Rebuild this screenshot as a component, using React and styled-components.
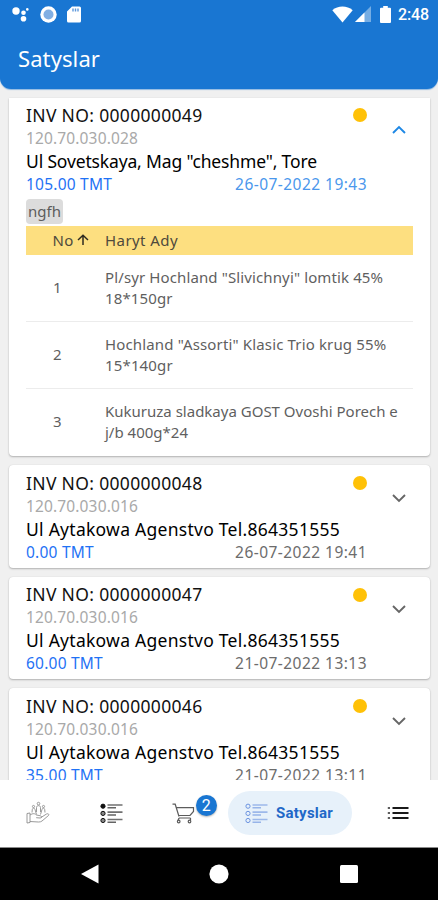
import React from 'react';
import styled, { createGlobalStyle } from 'styled-components';

const Global = createGlobalStyle`
  *, *::before, *::after { box-sizing: border-box; }
  body { margin: 0; background: #f0f0f0; font-family: "Noto Sans", "Open Sans", sans-serif; }
`;

const Screen = styled.div`
  width: 438px;
  height: 900px;
  display: flex;
  flex-direction: column;
  overflow: hidden;
  background: #f0f0f0;
`;

const AppBar = styled.header`
  flex: none;
  height: 89px;
  background: #1976d2;
  border-radius: 0 0 11px 11px;
  box-shadow: 0 1px 1px rgba(25, 118, 210, 0.45);
  color: #fff;
`;

const StatusBar = styled.div`
  height: 28px;
  display: flex;
  align-items: center;
  justify-content: space-between;
  padding: 0 9px 0 12px;
`;

const StatusGroup = styled.div`
  display: flex;
  align-items: center;
  gap: ${p => p.$gap}px;
`;

const BatterySlot = styled.span`
  display: flex;
  margin: 0 4.5px 0 6px;
`;

const Clock = styled.span`
  padding-top: 2px;
  font: 500 16px/20px Roboto, sans-serif;
  letter-spacing: -0.1px;
`;

const Title = styled.h1`
  margin: 0;
  padding: 16px 18px 0;
  font-size: 22px;
  font-weight: 400;
  line-height: 28px;
  letter-spacing: 0.1px;
`;

const List = styled.main`
  flex: 1;
  min-height: 0;
  overflow: hidden;
  display: flex;
  flex-direction: column;
  gap: 9px;
  padding: 9px 8px 0 8.5px;
`;

const Card = styled.article`
  flex: none;
  height: ${p => (p.$open ? 358 : 102.5)}px;
  padding: ${p => (p.$open ? 5.5 : 6.5)}px 17.5px 0;
  background: #fff;
  border-radius: ${p => (p.$open ? '0 0 4px 4px' : '4px')};
  box-shadow: 0 1px 2px rgba(0, 0, 0, 0.26), 0 0 1px rgba(0, 0, 0, 0.12);
`;

const Summary = styled.div`
  display: grid;
  grid-template-columns: 341px 1fr;
`;

const Lines = styled.div`
  display: flex;
  flex-direction: column;
`;

const Line = styled.div`
  height: 23px;
  line-height: 23px;
  display: flex;
  align-items: center;
  justify-content: space-between;
  white-space: nowrap;
`;

const Invoice = styled.span`
  font-size: 17.5px;
  letter-spacing: 0.33px;
  color: #111;
`;

const Code = styled.span`
  font-size: 15.5px;
  letter-spacing: 0.14px;
  color: #a9a9a9;
`;

const Client = styled.span`
  font-size: 17.5px;
  letter-spacing: ${p => p.$spacing}px;
  color: #000;
`;

const Amount = styled.span`
  font-size: 15.5px;
  letter-spacing: 0.22px;
  color: #1f72f5;
`;

const DateText = styled.span`
  font-size: 15.5px;
  letter-spacing: 0.46px;
  color: ${p => (p.$open ? '#4a97ec' : '#6c6c6c')};
`;

const Dot = styled.i`
  width: 14px;
  height: 14px;
  margin-right: 0.5px;
  border-radius: 50%;
  background: #ffc107;
`;

const Toggle = styled.div`
  display: flex;
  justify-content: center;
  padding: 21px 0 0 19px;
  color: ${p => (p.$open ? '#1e88e5' : '#666')};
`;

const Note = styled.span`
  display: block;
  width: 37px;
  height: 25px;
  margin-top: 3px;
  border-radius: 4px;
  background: #dcdcdc;
  color: #5c5c5c;
  font-size: 15px;
  line-height: 24px;
  text-align: center;
`;

const Table = styled.div`
  width: 387px;
  margin-top: 2.5px;
  font-size: 15px;
`;

const TableHead = styled.div`
  height: 28.5px;
  display: grid;
  grid-template-columns: 79px 1fr;
  align-items: center;
  background: #fddf80;
  color: #4f4a3c;
  letter-spacing: 0.43px;
`;

const NumberHead = styled.div`
  display: flex;
  align-items: center;
  gap: 3.5px;
  padding-left: 26.5px;
`;

const TableRow = styled.div`
  height: 67px;
  display: grid;
  grid-template-columns: 79px 1fr;
  align-items: center;
  border-bottom: 1.5px solid ${p => (p.$last ? 'transparent' : '#ececec')};
  color: #5f5f5f;
  line-height: 21px;
`;

const RowNumber = styled.span`
  padding-left: 27px;
`;

const Product = styled.span`
  white-space: pre-line;
  letter-spacing: ${p => p.$spacing}px;
`;

const BottomNav = styled.nav`
  flex: none;
  height: 68px;
  display: flex;
  align-items: center;
  padding-bottom: 1px;
  background: #fff;
  border-bottom: 1px solid #8a8a8a;
`;

const NavItem = styled.div`
  flex: none;
  width: ${p => p.$width}px;
  display: flex;
  justify-content: center;
  padding-left: ${p => p.$inset || 0}px;
`;

const CartItem = styled(NavItem)`
  padding-right: 8px;
`;

const CartWrap = styled.div`
  position: relative;
  display: flex;
`;

const Badge = styled.span`
  position: absolute;
  left: 24px;
  top: -8px;
  width: 21px;
  height: 21px;
  border-radius: 50%;
  background: #1976d2;
  box-shadow: 0 1px 2px rgba(0, 0, 0, 0.3);
  color: #fff;
  font: 400 16px/21px Roboto, sans-serif;
  text-align: center;
`;

const ActiveItem = styled.div`
  flex: none;
  width: 124.5px;
  height: 44px;
  display: flex;
  align-items: center;
  gap: 8.5px;
  padding-left: 17px;
  border-radius: 22px;
  background: #e7f1fa;
  color: #2168c8;
  font: 700 15px/20px Roboto, sans-serif;
  letter-spacing: 0.25px;
`;

const SystemBar = styled.footer`
  flex: none;
  height: 52px;
  display: grid;
  grid-template-columns: repeat(3, 129.5px);
  justify-content: center;
  align-items: center;
  justify-items: center;
  background: #000;
`;

const Chevron = ({ up }) => (
  <svg width="14" height="10" viewBox="0 0 14 10" fill="none" stroke="currentColor" strokeWidth="1.9">
    <path d={up ? 'M1 8 L7 2 L13 8' : 'M1 2 L7 8 L13 2'} />
  </svg>
);

const AssistantIcon = () => (
  <svg width="17" height="16" viewBox="0 0 17 16" fill="#fff">
    <circle cx="4" cy="5" r="3.7" />
    <circle cx="11.5" cy="6.7" r="2.3" />
    <circle cx="15.3" cy="3.4" r="1.3" />
    <circle cx="11.5" cy="12.7" r="2.8" />
  </svg>
);

const RecordIcon = () => (
  <svg width="17" height="17" viewBox="0 0 17 17">
    <circle cx="8.5" cy="8.5" r="8.2" fill="#fff" />
    <circle cx="8.5" cy="8.5" r="5" fill="#81afe3" />
  </svg>
);

const SdIcon = () => (
  <svg width="14" height="17" viewBox="0 0 14 17">
    <path d="M5 .5h7.5A1.5 1.5 0 0 1 14 2v13a1.5 1.5 0 0 1-1.5 1.5h-11A1.5 1.5 0 0 1 0 15V5.5z" fill="#fff" />
    <path d="M6 2.5v3M8.5 2.5v3M11 2.5v3" stroke="#5d98dc" strokeWidth="1.4" />
  </svg>
);

const WifiIcon = () => (
  <svg width="21" height="17" viewBox="0 0 21 17">
    <path d="M.3 4.2C6-.7 15-.7 20.7 4.2L10.5 16.5z" fill="#fff" />
  </svg>
);

const SignalIcon = () => (
  <svg width="16" height="16" viewBox="0 0 16 16">
    <path d="M16 0v16H0z" fill="#75ade4" />
    <path d="M9.5 6.5V16H0z" fill="#fff" />
  </svg>
);

const BatteryIcon = () => (
  <svg width="11" height="17" viewBox="0 0 11 17" fill="#fff">
    <path d="M3.2 0h4.6v1.8H10a1 1 0 0 1 1 1V16a1 1 0 0 1-1 1H1a1 1 0 0 1-1-1V2.8a1 1 0 0 1 1-1h2.2z" />
  </svg>
);

const ArrowUp = () => (
  <svg width="12" height="12" viewBox="0 0 12 12" fill="none" stroke="#2f2b20" strokeWidth="1.5">
    <path d="M6 11V1.5M1 6 6 1.3l5 4.7" />
  </svg>
);

const HandIcon = () => (
  <svg width="24" height="24" viewBox="0 0 24 24" fill="none" stroke="#8f8f8f" strokeWidth="0.9" strokeLinejoin="round">
    <path d="M1 12.5 4 12v9.5l-3 .5zM4 14c3-2 5-1.5 6.5 0l4 .8c1.5.5 1.3 2.2-.3 2.2l-4-.3M15 16.5l5.500-3.5c1.7-.8 3 .5 2 1.5L16 20c-1 .8-2 1-3.5 1L4 20.5" />
    <circle cx="12.5" cy="2.6" r="1.3" />
    <circle cx="7.5" cy="5.5" r="1.1" />
    <circle cx="17.5" cy="5.5" r="1.1" />
    <path d="M10.5 11V6.5c0-2.5 4-2.5 4 0V11M6 11.5 6.3 8.5c.4-2 2.4-1.5 2.7 0l1.5 5M19 11.5 18.7 8.5c-.4-2-2.4-1.5-2.7 0l-1.5 5" />
  </svg>
);

const DetailListIcon = ({ tone, filled }) => (
  <svg width="23" height="21" viewBox="0 0 23 21" fill="none" stroke={tone}>
    <path d="M7.5 2h15M7.5 9.2h15M7.5 16.5h15" strokeWidth="1.7" opacity=".6" />
    <path d="M7.5 4.8h8.5M7.5 12h8.5M7.5 19.2h8.5" strokeWidth="1.5" opacity=".65" />
    <circle cx="3" cy="3.2" r="2.1" fill={filled ? tone : 'none'} />
    <circle cx="3" cy="10.4" r="2.1" fill={filled ? '#888' : 'none'} />
    <circle cx="3" cy="17.5" r="2.1" fill={filled ? '#888' : 'none'} />
  </svg>
);

const CartIcon = () => (
  <svg width="23" height="21" viewBox="0 0 23 21" fill="none" stroke="#5c5c5c" strokeWidth="1.2">
    <path d="M.5 1.2h2.7L7 13.5M4.3 4.7h17.2v3.8L18 12.500H6.7M7 15H18.5M7 15l-1 2.5M18.5 15v2.5" />
    <circle cx="6.7" cy="18.5" r="1.3" />
    <circle cx="17.5" cy="18.5" r="1.3" />
  </svg>
);

const MenuIcon = () => (
  <svg width="22" height="14" viewBox="0 0 22 14" stroke="#1a1a1a">
    <path d="M5.5 2H21.5M5.5 7H21.5M5.5 12H21.5" strokeWidth="2" />
    <path d="M.8 2h2.2M.8 7h2.2M.8 12h2.2" strokeWidth="2" opacity=".7" />
  </svg>
);

const products = [
  { text: 'Pl/syr Hochland "Slivichnyi" lomtik 45%\n18*150gr', spacing: 0.12 },
  { text: 'Hochland "Assorti" Klasic Trio krug 55%\n15*140gr', spacing: 0.15 },
  { text: 'Kukuruza sladkaya GOST Ovoshi Porech e\nj/b 400g*24', spacing: 0 },
];

const agency = 'Ul Aytakowa Agenstvo Tel.864351555';

const sales = [
  { no: '0000000049', code: '120.70.030.028', client: 'Ul Sovetskaya, Mag "cheshme", Tore', spacing: -0.15, amount: '105.00 TMT', date: '26-07-2022 19:43', open: true },
  { no: '0000000048', code: '120.70.030.016', client: agency, spacing: 0.27, amount: '0.00 TMT', date: '26-07-2022 19:41' },
  { no: '0000000047', code: '120.70.030.016', client: agency, spacing: 0.27, amount: '60.00 TMT', date: '21-07-2022 13:13' },
  { no: '0000000046', code: '120.70.030.016', client: agency, spacing: 0.27, amount: '35.00 TMT', date: '21-07-2022 13:11' },
];

function ProductTable() {
  return (
    <Table>
      <TableHead>
        <NumberHead>No <ArrowUp /></NumberHead>
        <span>Haryt Ady</span>
      </TableHead>
      {products.map((p, i) => (
        <TableRow key={p.text} $last={i === products.length - 1}>
          <RowNumber>{i + 1}</RowNumber>
          <Product $spacing={p.spacing}>{p.text}</Product>
        </TableRow>
      ))}
    </Table>
  );
}

function Sale({ sale }) {
  return (
    <Card $open={sale.open}>
      <Summary>
        <Lines>
          <Line><Invoice>INV NO: {sale.no}</Invoice><Dot /></Line>
          <Line><Code>{sale.code}</Code></Line>
          <Line><Client $spacing={sale.spacing}>{sale.client}</Client></Line>
          <Line><Amount>{sale.amount}</Amount><DateText $open={sale.open}>{sale.date}</DateText></Line>
        </Lines>
        <Toggle $open={sale.open}><Chevron up={sale.open} /></Toggle>
      </Summary>
      {sale.open && <><Note>ngfh</Note><ProductTable /></>}
    </Card>
  );
}

export default function App() {
  return (
    <Screen>
      <Global />
      <AppBar>
        <StatusBar>
          <StatusGroup $gap={10.5}><AssistantIcon /><RecordIcon /><SdIcon /></StatusGroup>
          <StatusGroup $gap={2.5}>
            <WifiIcon />
            <SignalIcon />
            <BatterySlot><BatteryIcon /></BatterySlot>
            <Clock>2:48</Clock>
          </StatusGroup>
        </StatusBar>
        <Title>Satyslar</Title>
      </AppBar>
      <List>{sales.map(s => <Sale key={s.no} sale={s} />)}</List>
      <BottomNav>
        <NavItem $width={76}><HandIcon /></NavItem>
        <NavItem $width={71}><DetailListIcon tone="#111" filled /></NavItem>
        <CartItem $width={80.5}><CartWrap><CartIcon /><Badge>2</Badge></CartWrap></CartItem>
        <ActiveItem><DetailListIcon tone="#6b93e0" />Satyslar</ActiveItem>
        <NavItem $width={86} $inset={6}><MenuIcon /></NavItem>
      </BottomNav>
      <SystemBar>
        <svg width="18" height="20" viewBox="0 0 18 20" fill="#fff"><path d="M0 10 17.5 .5v19z" /></svg>
        <svg width="20" height="20" viewBox="0 0 20 20" fill="#fff"><circle cx="10" cy="10" r="9.6" /></svg>
        <svg width="18" height="18" viewBox="0 0 18 18" fill="#fff"><rect width="18" height="18" rx="1.5" /></svg>
      </SystemBar>
    </Screen>
  );
}
